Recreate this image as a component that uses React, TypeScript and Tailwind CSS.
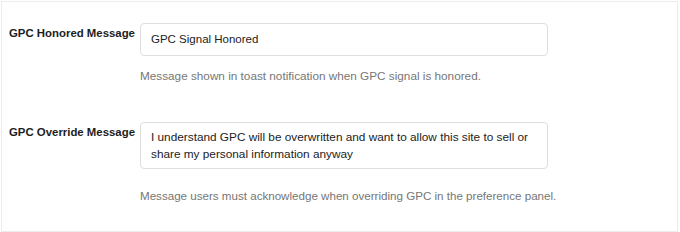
import React from "react";

export default function App() {
  return (
    <div
      className="w-[680px] h-[232px] bg-white p-px"
      style={{ fontFamily: "'Liberation Sans', Arial, sans-serif" }}
    >
      <div className="w-[677px] h-[231px] border border-[#ececec] pl-[7px] pt-[21px]">
        <div className="flex">
          <label className="w-[131px] shrink-0 pt-[2px] text-[11.4px] font-bold text-[#1d1d1d] leading-[16px] whitespace-nowrap">
            GPC Honored Message
          </label>
          <div className="w-[408px]">
            <div className="h-[33px] rounded-[4px] border border-[#dedede] px-[10px] flex items-center text-[11.5px] text-[#222]">
              GPC Signal Honored
            </div>
            <p className="mt-[12px] text-[11.75px] leading-[16px] text-[#767676] whitespace-nowrap">
              Message shown in toast notification when GPC signal is honored.
            </p>
          </div>
        </div>
        <div className="flex mt-[38px]">
          <label className="w-[131px] shrink-0 pt-[2px] text-[11.4px] font-bold text-[#1d1d1d] leading-[16px] whitespace-nowrap">
            GPC Override Message
          </label>
          <div className="w-[408px]">
            <div className="h-[47px] rounded-[4px] border border-[#dedede] px-[10px] pt-[6px] text-[11.8px] leading-[17px] text-[#222]">
              I understand GPC will be overwritten and want to allow this site to sell or share my personal information anyway
            </div>
            <p className="mt-[19px] text-[11.6px] leading-[16px] text-[#767676] whitespace-nowrap">
              Message users must acknowledge when overriding GPC in the preference panel.
            </p>
          </div>
        </div>
      </div>
    </div>
  );
}
